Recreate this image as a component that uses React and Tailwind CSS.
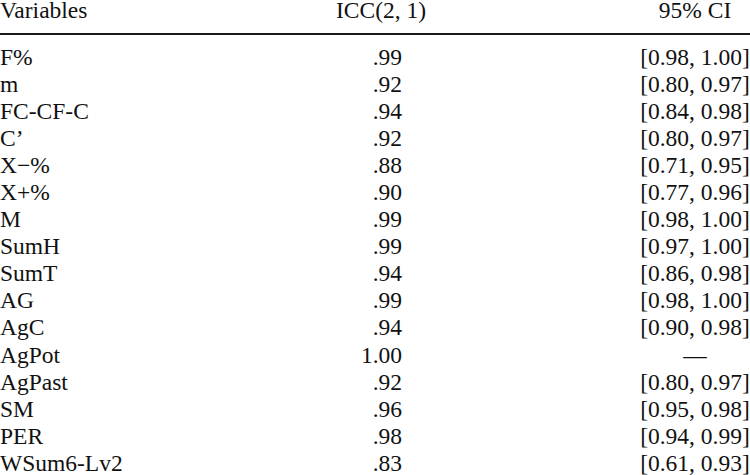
import React from 'react';

const rows = [
  ['F%', '.99', '[0.98, 1.00]'],
  ['m', '.92', '[0.80, 0.97]'],
  ['FC-CF-C', '.94', '[0.84, 0.98]'],
  ['C’', '.92', '[0.80, 0.97]'],
  ['X−%', '.88', '[0.71, 0.95]'],
  ['X+%', '.90', '[0.77, 0.96]'],
  ['M', '.99', '[0.98, 1.00]'],
  ['SumH', '.99', '[0.97, 1.00]'],
  ['SumT', '.94', '[0.86, 0.98]'],
  ['AG', '.99', '[0.98, 1.00]'],
  ['AgC', '.94', '[0.90, 0.98]'],
  ['AgPot', '1.00', '—'],
  ['AgPast', '.92', '[0.80, 0.97]'],
  ['SM', '.96', '[0.95, 0.98]'],
  ['PER', '.98', '[0.94, 0.99]'],
  ['WSum6-Lv2', '.83', '[0.61, 0.93]'],
];

const cols = 'grid grid-cols-[336px_91px_213px_110px]';

export default function App() {
  return (
    <div className="w-[750px] h-[475px] overflow-hidden bg-white text-[#111] font-['Liberation_Serif','Times_New_Roman',serif] text-[23.5px]">
      <div className={`${cols} h-[33px] leading-[20px] whitespace-nowrap`}>
        <div>Variables</div>
        <div>ICC(2, 1)</div>
        <div />
        <div className="text-center">95% CI</div>
      </div>
      <div className="h-[2px] bg-[#1a1a1a]" />
      <div className="pt-[8.5px]">
        {rows.map(([name, icc, ci]) => (
          <div key={name} className={`${cols} h-[27.1px] leading-[27.1px] whitespace-nowrap`}>
            <div>{name}</div>
            <div className="text-right pr-[25px]">{icc}</div>
            <div />
            <div className="text-center">{ci}</div>
          </div>
        ))}
      </div>
    </div>
  );
}
